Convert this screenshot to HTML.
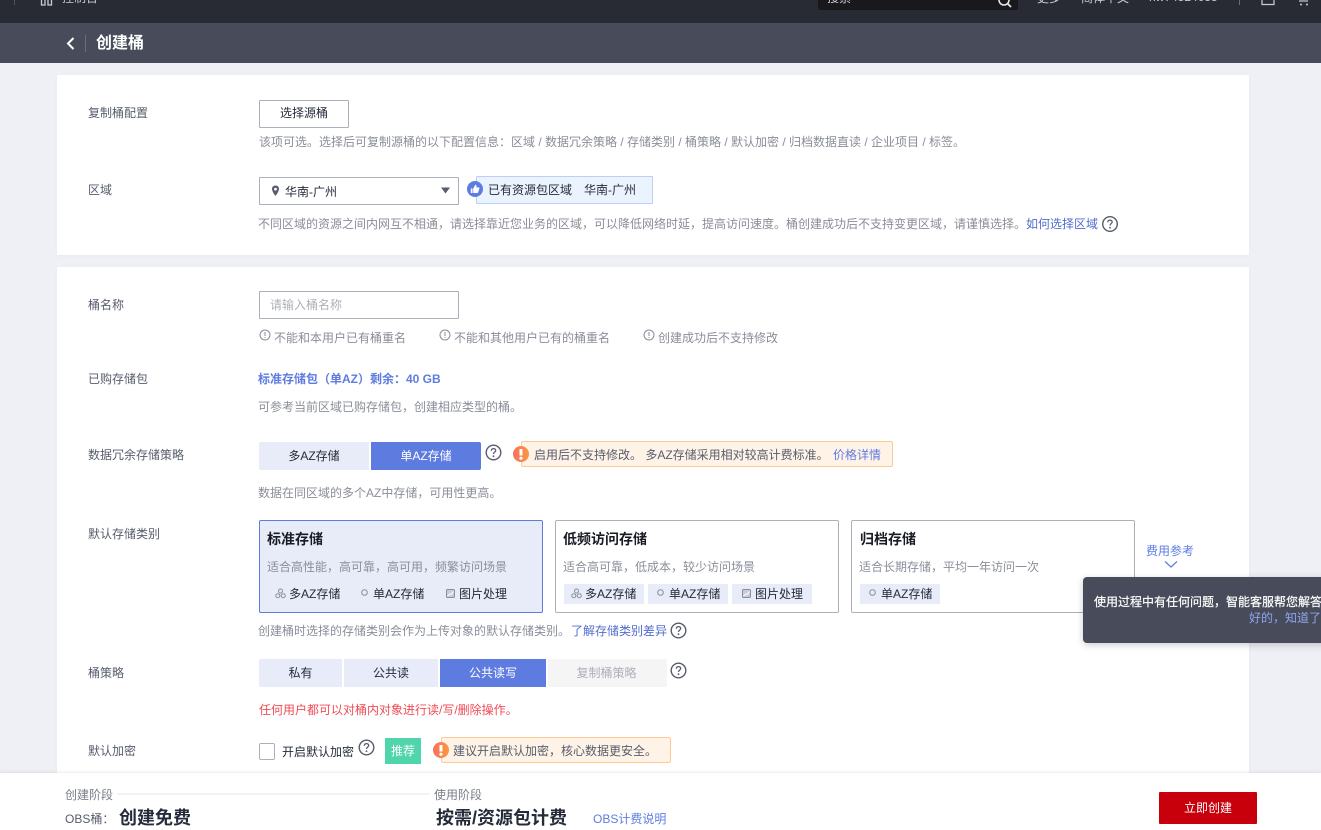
<!DOCTYPE html>
<html lang="zh-CN">
<head>
<meta charset="utf-8">
<title>创建桶</title>
<style>
html,body{margin:0;padding:0;width:1321px;height:830px;overflow:hidden;background:#eef0f5}
body{position:relative;font-family:"Liberation Sans","Noto Sans CJK SC",sans-serif;font-size:12px;color:#252b3a}
.a,.t,.box,svg.i{position:absolute}
.t{white-space:nowrap;line-height:18px;height:18px}
.box{box-sizing:border-box}
.lab{color:#575d6c}
.g{color:#8a8e99}
.b{color:#5e7ce0}
.seg{position:absolute;box-sizing:border-box;height:28px;line-height:28px;text-align:center;background:#e8ecf8;color:#252b3a;white-space:nowrap}
.on{background:#5e7ce0;color:#fff}
.card{position:absolute;box-sizing:border-box;top:520px;height:93px;border:1px solid #adb0b8;border-radius:2px;background:#fff}
.tag{position:absolute;height:20px;top:584px;width:80px;background:#e8ecf8}
.h{font-size:14px;font-weight:700;color:#191c24}
.warn{position:absolute;box-sizing:border-box;background:#fff3e8;border:1px solid #fccb94;border-radius:2px}
</style>
</head>
<body>
<svg width="0" height="0" style="position:absolute"><defs><linearGradient id="og" x1="0" y1="0" x2="1" y2="0"><stop offset="0" stop-color="#f6705f"/><stop offset="1" stop-color="#fa9a3e"/></linearGradient></defs></svg>
<!-- top nav -->
<div class="box" style="left:0;top:0;width:1321px;height:23px;background:#282b33"></div>
<div class="box" style="left:14px;top:0;width:1px;height:5px;background:#555"></div>
<svg class="i" style="left:40px;top:0" width="13" height="6" viewBox="0 0 13 6"><path d="M1.500 0V5H5V0M8 0V5H11.500V0" fill="none" stroke="#c9ccd3" stroke-width="1.300"/></svg>
<div class="t" style="left:62px;top:-11px;color:#c9ccd3">控制台</div>
<div class="box" style="left:818px;top:0;width:200px;height:10px;background:#19191b;border-radius:0 0 2px 2px;overflow:hidden"></div>
<div class="t" style="left:827px;top:-11px;color:#c9ccd3">搜索</div>
<svg class="i" style="left:996px;top:0" width="18" height="9" viewBox="0 0 18 9"><circle cx="8" cy="0" r="5" fill="none" stroke="#e3e5ea" stroke-width="1.600"/><path d="M11.500 3.500L15 7" stroke="#e3e5ea" stroke-width="1.800"/></svg>
<div class="t" style="left:1037px;top:-11px;color:#c9ccd3">更多</div>
<div class="t" style="left:1081px;top:-11px;color:#c9ccd3">简体中文</div>
<div class="t" style="left:1149px;top:-12px;color:#c9ccd3">hw74524055</div>
<div class="box" style="left:1239px;top:0;width:1px;height:5px;background:#6a6d75"></div>
<svg class="i" style="left:1261px;top:0" width="14" height="6" viewBox="0 0 14 6"><path d="M1 0V4.500H13V0" fill="none" stroke="#c9ccd3" stroke-width="1.200"/></svg>
<svg class="i" style="left:1297px;top:0" width="14" height="6" viewBox="0 0 14 6"><path d="M2 1H11" stroke="#c9ccd3" stroke-width="1.200"/><circle cx="4" cy="4.500" r="1" fill="#c9ccd3"/><circle cx="10" cy="4.500" r="1" fill="#c9ccd3"/></svg>

<!-- page header -->
<div class="box" style="left:0;top:23px;width:1321px;height:40px;background:#484c5a"></div>
<svg class="i" style="left:64px;top:36px" width="14" height="15" viewBox="0 0 14 15"><path d="M9.500 2L4 7.500L9.500 13" fill="none" stroke="#fff" stroke-width="2"/></svg>
<div class="box" style="left:85px;top:35px;width:1px;height:17px;background:#6b6f7c"></div>
<div class="t" style="left:96px;top:34px;font-size:16px;font-weight:700;color:#fff;line-height:20px;height:20px">创建桶</div>

<!-- card 1 -->
<div class="box" style="left:57px;top:75px;width:1192px;height:180px;background:#fff;box-shadow:0 1px 4px rgba(0,0,0,.03)"></div>
<div class="t lab" style="left:88px;top:104px">复制桶配置</div>
<div class="box" style="left:259px;top:100px;width:90px;height:28px;border:1px solid #adb0b8;border-radius:1px;line-height:24px;text-align:center">选择源桶</div>
<div class="t g" style="left:259px;top:133px">该项可选。选择后可复制源桶的以下配置信息：区域 / 数据冗余策略 / 存储类别 / 桶策略 / 默认加密 / 归档数据直读 / 企业项目 / 标签。</div>
<div class="t lab" style="left:88px;top:181px">区域</div>
<div class="box" style="left:259px;top:177px;width:200px;height:28px;border:1px solid #adb0b8;border-radius:1px"></div>
<svg class="i" style="left:271px;top:185px" width="9" height="12" viewBox="0 0 9 12"><path fill-rule="evenodd" d="M4.500 0.500C2.300 0.500 1 2.100 1 4C1 6.500 4.500 11 4.500 11S8 6.500 8 4C8 2.100 6.700 0.500 4.500 0.500ZM4.500 2.700A1.400 1.400 0 1 1 4.500 5.500A1.400 1.400 0 1 1 4.500 2.700Z" fill="#575d6c"/></svg>
<div class="t" style="left:285px;top:183px">华南-广州</div>
<svg class="i" style="left:441px;top:187px" width="9" height="7" viewBox="0 0 9 7"><path d="M0 0.500H9L4.500 6.500Z" fill="#575d6c"/></svg>
<div class="box" style="left:476px;top:176px;width:177px;height:28px;background:#ebf4fe;border:1px solid #bcd0f7;border-radius:1px"></div>
<svg class="i" style="left:467px;top:181px" width="16" height="16" viewBox="0 0 16 16"><circle cx="8" cy="8" r="8" fill="#5e7ce0"/><path d="M3.800 7.500H5.500V12H3.800ZM6.200 7.500L8.300 3.800C9.500 3.800 9.800 4.900 9.300 6.400H12C12.400 6.400 12.600 6.800 12.400 7.300L11.200 11.300C11.100 11.700 10.800 12 10.400 12H6.200Z" fill="#fff"/></svg>
<div class="t" style="left:488px;top:181px">已有资源包区域</div>
<div class="t" style="left:584px;top:181px">华南-广州</div>
<div class="t g" style="left:258px;top:215px">不同区域的资源之间内网互不相通，请选择靠近您业务的区域，可以降低网络时延，提高访问速度。桶创建成功后不支持变更区域，请谨慎选择。<span style="color:#526ecc">如何选择区域</span></div>
<svg class="i" style="left:1101px;top:215px" width="18" height="18" viewBox="0 0 18 18"><circle cx="9" cy="9" r="7.300" fill="none" stroke="#575d6c" stroke-width="1.400"/><path d="M6.800 7.200C6.800 5.900 7.800 5.100 9 5.100C10.300 5.100 11.200 5.900 11.200 7C11.200 8.500 9 8.600 9 10.500" fill="none" stroke="#575d6c" stroke-width="1.300"/><circle cx="9" cy="12.700" r=".9" fill="#575d6c"/></svg>

<!-- card 2 -->
<div class="box" style="left:57px;top:267px;width:1192px;height:520px;background:#fff;box-shadow:0 1px 4px rgba(0,0,0,.03)"></div>
<div class="t lab" style="left:88px;top:296px">桶名称</div>
<div class="box" style="left:259px;top:291px;width:200px;height:28px;border:1px solid #adb0b8;border-radius:1px"></div>
<div class="t" style="left:270px;top:296px;color:#adb0b8">请输入桶名称</div>
<svg class="i" style="left:259px;top:329px" width="12" height="12" viewBox="0 0 12 12"><circle cx="6" cy="6" r="5" fill="none" stroke="#8a8e99"/><path d="M6 3V7M6 8V9" stroke="#8a8e99"/></svg>
<div class="t g" style="left:274px;top:329px">不能和本用户已有桶重名</div>
<svg class="i" style="left:439px;top:329px" width="12" height="12" viewBox="0 0 12 12"><circle cx="6" cy="6" r="5" fill="none" stroke="#8a8e99"/><path d="M6 3V7M6 8V9" stroke="#8a8e99"/></svg>
<div class="t g" style="left:454px;top:329px">不能和其他用户已有的桶重名</div>
<svg class="i" style="left:643px;top:329px" width="12" height="12" viewBox="0 0 12 12"><circle cx="6" cy="6" r="5" fill="none" stroke="#8a8e99"/><path d="M6 3V7M6 8V9" stroke="#8a8e99"/></svg>
<div class="t g" style="left:658px;top:329px">创建成功后不支持修改</div>

<div class="t lab" style="left:88px;top:370px">已购存储包</div>
<div class="t" style="left:258px;top:370px;font-weight:700;color:#5e7ce0">标准存储包（单AZ）剩余：40 GB</div>
<div class="t g" style="left:258px;top:398px">可参考当前区域已购存储包，创建相应类型的桶。</div>

<div class="t lab" style="left:88px;top:446px">数据冗余存储策略</div>
<div class="seg" style="left:259px;top:442px;width:110px;border-radius:2px 0 0 2px">多AZ存储</div>
<div class="seg on" style="left:371px;top:442px;width:110px;border-radius:0 2px 2px 0">单AZ存储</div>
<svg class="i" style="left:485px;top:444px" width="17" height="17" viewBox="0 0 17 17"><circle cx="8.500" cy="8.500" r="7.300" fill="none" stroke="#575d6c" stroke-width="1.400"/><path d="M6.300 6.700C6.300 5.400 7.300 4.600 8.500 4.600C9.800 4.600 10.700 5.400 10.700 6.500C10.700 8 8.500 8.100 8.500 10" fill="none" stroke="#575d6c" stroke-width="1.300"/><circle cx="8.500" cy="12.200" r=".9" fill="#575d6c"/></svg>
<div class="warn" style="left:521px;top:441px;width:372px;height:26px"></div>
<svg class="i" style="left:513px;top:446px" width="16" height="16" viewBox="0 0 16 16"><circle cx="8" cy="8" r="8" fill="url(#og)"/><path d="M8 3V9.500" stroke="#fff" stroke-width="3"/><circle cx="8" cy="12.200" r="1.600" fill="#fff"/></svg>
<div class="t lab" style="left:534px;top:446px">启用后不支持修改。 多AZ存储采用相对较高计费标准。 <span style="color:#5e7ce0;margin-left:1px">价格详情</span></div>
<div class="t g" style="left:258px;top:484px">数据在同区域的多个AZ中存储，可用性更高。</div>

<div class="t lab" style="left:88px;top:525px">默认存储类别</div>
<div class="card" style="left:259px;width:284px;border-color:#5e7ce0;background:#e8ecf8"></div>
<div class="t h" style="left:267px;top:530px">标准存储</div>
<div class="t g" style="left:267px;top:558px">适合高性能，高可靠，高可用，频繁访问场景</div>
<svg class="i" style="left:275px;top:588px" width="11" height="11" viewBox="0 0 11 11"><g fill="none" stroke="#8a8e99"><circle cx="5.500" cy="3" r="2"/><circle cx="2.800" cy="7.700" r="2"/><circle cx="8.200" cy="7.700" r="2"/></g></svg>
<div class="t" style="left:289px;top:585px">多AZ存储</div>
<svg class="i" style="left:360px;top:588px" width="9" height="9" viewBox="0 0 9 9"><circle cx="4.500" cy="4.500" r="2.800" fill="none" stroke="#8a8e99"/></svg>
<div class="t" style="left:373px;top:585px">单AZ存储</div>
<svg class="i" style="left:446px;top:589px" width="9" height="9" viewBox="0 0 9 9"><rect x=".5" y=".5" width="8" height="8" rx="1" fill="#c9ccd6" stroke="#8a8e99"/><path d="M1.500 7L4 5L5 5.500L7.500 2.500" fill="none" stroke="#fff"/></svg>
<div class="t" style="left:459px;top:585px">图片处理</div>

<div class="card" style="left:555px;width:284px"></div>
<div class="t h" style="left:563px;top:530px">低频访问存储</div>
<div class="t g" style="left:563px;top:558px">适合高可靠，低成本，较少访问场景</div>
<div class="tag" style="left:564px"></div><div class="tag" style="left:648px"></div><div class="tag" style="left:732px"></div>
<svg class="i" style="left:571px;top:588px" width="11" height="11" viewBox="0 0 11 11"><g fill="none" stroke="#8a8e99"><circle cx="5.500" cy="3" r="2"/><circle cx="2.800" cy="7.700" r="2"/><circle cx="8.200" cy="7.700" r="2"/></g></svg>
<div class="t" style="left:585px;top:585px">多AZ存储</div>
<svg class="i" style="left:656px;top:588px" width="9" height="9" viewBox="0 0 9 9"><circle cx="4.500" cy="4.500" r="2.800" fill="none" stroke="#8a8e99"/></svg>
<div class="t" style="left:669px;top:585px">单AZ存储</div>
<svg class="i" style="left:742px;top:589px" width="9" height="9" viewBox="0 0 9 9"><rect x=".5" y=".5" width="8" height="8" rx="1" fill="#c9ccd6" stroke="#8a8e99"/><path d="M1.500 7L4 5L5 5.500L7.500 2.500" fill="none" stroke="#fff"/></svg>
<div class="t" style="left:755px;top:585px">图片处理</div>

<div class="card" style="left:851px;width:284px"></div>
<div class="t h" style="left:860px;top:530px">归档存储</div>
<div class="t g" style="left:859px;top:558px">适合长期存储，平均一年访问一次</div>
<div class="tag" style="left:860px"></div>
<svg class="i" style="left:868px;top:588px" width="9" height="9" viewBox="0 0 9 9"><circle cx="4.500" cy="4.500" r="2.800" fill="none" stroke="#8a8e99"/></svg>
<div class="t" style="left:881px;top:585px">单AZ存储</div>

<div class="t" style="left:1146px;top:542px;color:#5e7ce0">费用参考</div>
<svg class="i" style="left:1164px;top:560px" width="14" height="9" viewBox="0 0 14 9"><path d="M1 1.500L7 7L13 1.500" fill="none" stroke="#5e7ce0" stroke-width="1.200"/></svg>

<div class="t g" style="left:258px;top:622px">创建桶时选择的存储类别会作为上传对象的默认存储类别。<span style="color:#526ecc;margin-left:1px">了解存储类别差异</span></div>
<svg class="i" style="left:670px;top:622px" width="17" height="17" viewBox="0 0 17 17"><circle cx="8.500" cy="8.500" r="7.300" fill="none" stroke="#575d6c" stroke-width="1.400"/><path d="M6.300 6.700C6.300 5.400 7.300 4.600 8.500 4.600C9.800 4.600 10.700 5.400 10.700 6.500C10.700 8 8.500 8.100 8.500 10" fill="none" stroke="#575d6c" stroke-width="1.300"/><circle cx="8.500" cy="12.200" r=".9" fill="#575d6c"/></svg>

<div class="t lab" style="left:88px;top:664px">桶策略</div>
<div class="seg" style="left:259px;top:659px;width:83px;border-radius:2px 0 0 2px">私有</div>
<div class="seg" style="left:344px;top:659px;width:94px">公共读</div>
<div class="seg on" style="left:440px;top:659px;width:106px">公共读写</div>
<div class="seg" style="left:548px;top:659px;width:119px;padding-right:2px;background:#f5f5f6;color:#adb0b8;border-radius:0 2px 2px 0">复制桶策略</div>
<svg class="i" style="left:670px;top:662px" width="17" height="17" viewBox="0 0 17 17"><circle cx="8.500" cy="8.500" r="7.300" fill="none" stroke="#575d6c" stroke-width="1.400"/><path d="M6.300 6.700C6.300 5.400 7.300 4.600 8.500 4.600C9.800 4.600 10.700 5.400 10.700 6.500C10.700 8 8.500 8.100 8.500 10" fill="none" stroke="#575d6c" stroke-width="1.300"/><circle cx="8.500" cy="12.200" r=".9" fill="#575d6c"/></svg>
<div class="t" style="left:259px;top:701px;color:#f04b55">任何用户都可以对桶内对象进行读/写/删除操作。</div>

<div class="t lab" style="left:88px;top:742px">默认加密</div>
<div class="box" style="left:259px;top:743px;width:16px;height:17px;border:1px solid #adb0b8;border-radius:2px;background:#fff"></div>
<div class="t" style="left:282px;top:743px">开启默认加密</div>
<svg class="i" style="left:358px;top:739px" width="17" height="17" viewBox="0 0 17 17"><circle cx="8.500" cy="8.500" r="7.300" fill="none" stroke="#575d6c" stroke-width="1.400"/><path d="M6.300 6.700C6.300 5.400 7.300 4.600 8.500 4.600C9.800 4.600 10.700 5.400 10.700 6.500C10.700 8 8.500 8.100 8.500 10" fill="none" stroke="#575d6c" stroke-width="1.300"/><circle cx="8.500" cy="12.200" r=".9" fill="#575d6c"/></svg>
<div class="box" style="left:385px;top:738px;width:36px;height:26px;background:#50d4ab;color:#fff;text-align:center;line-height:26px">推荐</div>
<div class="warn" style="left:441px;top:737px;width:230px;height:26px"></div>
<svg class="i" style="left:433px;top:742px" width="16" height="16" viewBox="0 0 16 16"><circle cx="8" cy="8" r="8" fill="url(#og)"/><path d="M8 3V9.500" stroke="#fff" stroke-width="3"/><circle cx="8" cy="12.200" r="1.600" fill="#fff"/></svg>
<div class="t lab" style="left:453px;top:742px">建议开启默认加密，核心数据更安全。</div>

<!-- tooltip -->
<div class="box" style="left:1083px;top:577px;width:260px;height:66px;background:#484c5a;border-radius:4px;box-shadow:0 2px 8px rgba(0,0,0,.2)"></div>
<div class="t" style="left:1094px;top:593px;color:#fff;-webkit-text-stroke:.2px #fff">使用过程中有任何问题，智能客服帮您解答</div>
<div class="t" style="left:1249px;top:609px;color:#8ea4ee">好的，知道了</div>

<!-- footer -->
<div class="box" style="left:0;top:773px;width:1321px;height:57px;background:#fff;box-shadow:0 -1px 3px rgba(0,0,0,.08)"></div>
<div class="t" style="left:65px;top:786px;color:#7a7e89">创建阶段</div>
<div class="box" style="left:117px;top:793px;width:313px;height:2px;background:#f3f3f4"></div>
<div class="t" style="left:434px;top:786px;color:#7a7e89">使用阶段</div>
<div class="t lab" style="left:65px;top:810px">OBS桶：</div>
<div class="t" style="left:119px;top:806px;font-size:18px;font-weight:700;color:#252b3a;line-height:24px;height:24px">创建免费</div>
<div class="t" style="left:436px;top:806px;font-size:18px;font-weight:700;color:#252b3a;line-height:24px;height:24px">按需/资源包计费</div>
<div class="t" style="left:593px;top:810px;color:#5e7ce0">OBS计费说明</div>
<div class="box" style="left:1159px;top:792px;width:98px;height:32px;background:#c7000b;border-radius:1px;color:#fff;text-align:center;line-height:32px">立即创建</div>
</body>
</html>
